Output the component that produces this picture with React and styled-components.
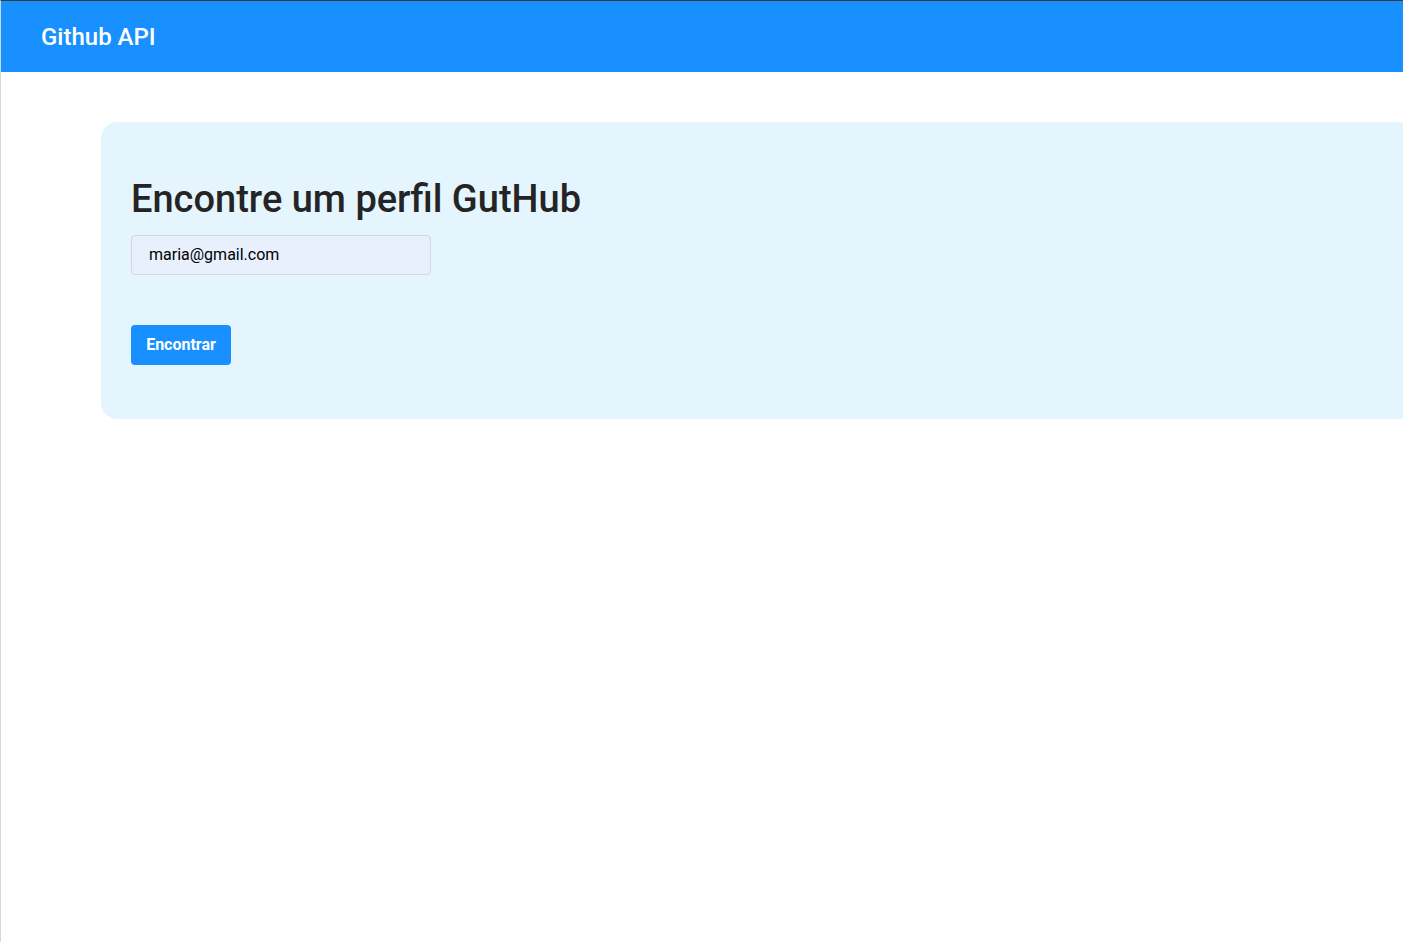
import React from "react";
import styled, { createGlobalStyle } from "styled-components";

const Global = createGlobalStyle`
  html, body { margin: 0; padding: 0; background: #ffffff; }
  body { font-family: Roboto, "Noto Sans", Arial, sans-serif; }
`;

const Frame = styled.div`
  width: 1402px;
  height: 941px;
  border-top: 1px solid #3a3a3a;
  border-left: 1px solid #cddbe8;
  overflow: hidden;
  background: #ffffff;
`;

const Header = styled.header`
  height: 71px;
  background: #1890ff;
  display: flex;
  align-items: center;
  padding-left: 40px;
`;

const Brand = styled.h2`
  margin: 0;
  color: #ffffff;
  font-size: 24px;
  font-weight: 500;
  letter-spacing: 0;
`;

const Main = styled.main`
  padding: 50px 0 0 100px;
`;

const Card = styled.section`
  width: 1400px;
  background: #e4f5fe;
  border-radius: 16px;
  padding: 54px 30px 54px;
  display: flex;
  flex-direction: column;
  align-items: flex-start;
`;

const Title = styled.h1`
  margin: 0 0 13px;
  font-size: 38px;
  line-height: 46px;
  font-weight: 500;
  color: #242424;
`;

const Input = styled.input`
  box-sizing: border-box;
  width: 300px;
  height: 40px;
  padding: 0 17px 2px;
  background: #e8f0fe;
  border: 1px solid #d4d8de;
  border-radius: 4px;
  font-family: Roboto, Arial, sans-serif;
  font-size: 16px;
  color: #000000;
  outline: none;
  margin-bottom: 50px;
`;

const Button = styled.button`
  box-sizing: border-box;
  width: 100px;
  height: 40px;
  padding: 0 0 2px;
  background: #1890ff;
  border: none;
  border-radius: 4px;
  color: #ffffff;
  font-family: Roboto, Arial, sans-serif;
  font-size: 16px;
  font-weight: 700;
  cursor: pointer;
`;

export default function App() {
  return (
    <>
      <Global />
      <Frame>
        <Header>
          <Brand>Github API</Brand>
        </Header>
        <Main>
          <Card>
            <Title>Encontre um perfil GutHub</Title>
            <Input defaultValue="maria@gmail.com" />
            <Button>Encontrar</Button>
          </Card>
        </Main>
      </Frame>
    </>
  );
}
